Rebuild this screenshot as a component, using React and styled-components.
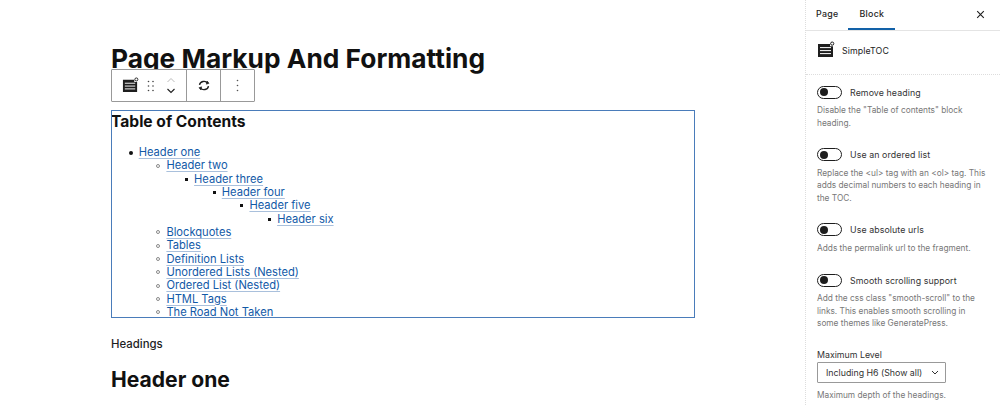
import styled, { createGlobalStyle } from "styled-components";

const Global = createGlobalStyle`
    html, body {
        margin: 0;
        height: 100%;
        overflow: hidden;
        background: #ffffff;
        font-family: Inter, "Liberation Sans", sans-serif;
    }
`

function TocIcon({size}) {
    return (
        <svg width={size} height={size} viewBox="0 0 18 18" fill="none">
            <path d="M1 3h12v2.2h3V16H1z" fill="#1e1e1e" />
            <path d="M3 6.6h11M3 9.6h11M3 12.6h11" stroke="#ffffff" strokeWidth="1" />
            <circle cx="15.2" cy="2.6" r="1.6" fill="#ffffff" stroke="#1e1e1e" strokeWidth="1" />
        </svg>
    )
}

function Toggle() {
    return <ToggleTrack><ToggleKnob /></ToggleTrack>
}

const settings = [
    {label: 'Remove heading', help: 'Disable the "Table of contents" block heading.'},
    {label: 'Use an ordered list', help: 'Replace the <ul> tag with an <ol> tag. This adds decimal numbers to each heading in the TOC.'},
    {label: 'Use absolute urls', help: 'Adds the permalink url to the fragment.'},
    {label: 'Smooth scrolling support', help: 'Add the css class "smooth-scroll" to the links. This enables smooth scrolling in some themes like GeneratePress.'},
]

const subHeadings = ['Blockquotes', 'Tables', 'Definition Lists', 'Unordered Lists (Nested)', 'Ordered List (Nested)', 'HTML Tags', 'The Road Not Taken']

export default function App() {
    return (
        <Page>
            <Global />
            <Editor>
                <Column>
                    <Title>Page Markup And Formatting</Title>
                    <Toolbar>
                        <ToolGroup $width={75}>
                            <TocIcon size={17} />
                            <svg width="8" height="12" viewBox="0 0 8 12" fill="#444">
                                <circle cx="1.5" cy="1.5" r="0.8" /><circle cx="6" cy="1.5" r="0.8" />
                                <circle cx="1.5" cy="6" r="0.8" /><circle cx="6" cy="6" r="0.8" />
                                <circle cx="1.5" cy="10.5" r="0.8" /><circle cx="6" cy="10.5" r="0.8" />
                            </svg>
                            <Mover>
                                <svg width="10" height="6" viewBox="0 0 10 6" fill="none"><path d="M1.5 5 5 1.5 8.5 5" stroke="#bbb" strokeWidth="1" /></svg>
                                <svg width="10" height="6" viewBox="0 0 10 6" fill="none"><path d="M1.5 1 5 4.5 8.5 1" stroke="#1e1e1e" strokeWidth="1.1" /></svg>
                            </Mover>
                        </ToolGroup>
                        <ToolGroup $width={34}>
                            <svg width="12" height="11" viewBox="0 0 13 12" fill="none" stroke="#1e1e1e" strokeWidth="1.5">
                                <path d="M1.6 5.4A5 4.6 0 0 1 10.6 3.4" />
                                <path d="M11.4 6.6A5 4.6 0 0 1 2.4 8.6" />
                                <path d="M12 3.6 9 4.6 10 1.2z" fill="#1e1e1e" strokeWidth="0.6" />
                                <path d="M1 8.4 4 7.4 3 10.8z" fill="#1e1e1e" strokeWidth="0.6" />
                            </svg>
                        </ToolGroup>
                        <ToolGroup $width={33}>
                            <svg width="3" height="13" viewBox="0 0 3 13" fill="#555">
                                <circle cx="1.5" cy="1.5" r="0.8" /><circle cx="1.5" cy="6.5" r="0.8" /><circle cx="1.5" cy="11.5" r="0.8" />
                            </svg>
                        </ToolGroup>
                    </Toolbar>
                    <TocBlock>
                        <TocTitle>Table of Contents</TocTitle>
                        <TocList $kind="disc">
                            <li>
                                <TocLink>Header one</TocLink>
                                <TocList $kind="circle">
                                    <li>
                                        <TocLink>Header two</TocLink>
                                        <TocList $kind="square">
                                            <li>
                                                <TocLink>Header three</TocLink>
                                                <TocList $kind="square">
                                                    <li>
                                                        <TocLink>Header four</TocLink>
                                                        <TocList $kind="square">
                                                            <li>
                                                                <TocLink>Header five</TocLink>
                                                                <TocList $kind="square">
                                                                    <li><TocLink>Header six</TocLink></li>
                                                                </TocList>
                                                            </li>
                                                        </TocList>
                                                    </li>
                                                </TocList>
                                            </li>
                                        </TocList>
                                    </li>
                                    {subHeadings.map((h) => <li key={h}><TocLink>{h}</TocLink></li>)}
                                </TocList>
                            </li>
                        </TocList>
                    </TocBlock>
                    <Paragraph>Headings</Paragraph>
                    <HeaderOne>Header one</HeaderOne>
                </Column>
            </Editor>
            <Sidebar>
                <Tabs>
                    <Tab $pad={10}>Page</Tab>
                    <Tab $pad={11} $active>Block</Tab>
                    <Close>
                        <svg width="9" height="9" viewBox="0 0 9 9" fill="none"><path d="M1.2 1.2l6.6 6.6M7.8 1.2 1.2 7.8" stroke="#1e1e1e" strokeWidth="1.1" /></svg>
                    </Close>
                </Tabs>
                <BlockCard>
                    <TocIcon size={18} />
                    <BlockName>SimpleTOC</BlockName>
                </BlockCard>
                <Panel>
                    {settings.map((s) => (
                        <Setting key={s.label}>
                            <ToggleRow>
                                <Toggle />
                                <ToggleLabel>{s.label}</ToggleLabel>
                            </ToggleRow>
                            <Help>{s.help}</Help>
                        </Setting>
                    ))}
                    <FieldLabel>Maximum Level</FieldLabel>
                    <SelectBox>
                        <span>Including H6 (Show all)</span>
                        <svg width="8" height="5" viewBox="0 0 8 5" fill="none"><path d="M1 1l3 3 3-3" stroke="#333" strokeWidth="1" /></svg>
                    </SelectBox>
                    <Help>Maximum depth of the headings.</Help>
                </Panel>
            </Sidebar>
        </Page>
    )
}

const Page = styled.div`
    display: flex;
    width: 1000px;
    height: 405px;
    overflow: hidden;
`

const Editor = styled.div`
    width: 805px;
    flex-shrink: 0;
    padding-left: 111px;
    box-sizing: border-box;
`

const Column = styled.div`
    position: relative;
    width: 584px;
    padding-top: 43px;
`

const Title = styled.h1`
    margin: 0 0 36px;
    font-size: 26.3px;
    line-height: 31px;
    font-weight: 700;
    color: #111111;
    white-space: nowrap;
`

const Toolbar = styled.div`
    position: absolute;
    left: 0;
    top: 69px;
    height: 33px;
    display: flex;
    background: #ffffff;
    border: 1px solid #999999;
    box-sizing: border-box;
    border-radius: 1px;
`

const ToolGroup = styled.div`
    width: ${(props) => props.$width}px;
    box-sizing: border-box;
    display: flex;
    align-items: center;
    justify-content: center;
    gap: 8px;
    border-right: 1px solid #999999;
    &:last-child {
        border-right: none;
    }
`

const Mover = styled.div`
    display: flex;
    flex-direction: column;
    gap: 5px;
    margin-left: 3px;
`

const TocBlock = styled.div`
    height: 208px;
    box-sizing: border-box;
    padding-top: 2px;
    outline: 1px solid #4a7cba;
    outline-offset: -1px;
    overflow: hidden;
`

const TocTitle = styled.h2`
    margin: 0 0 14px;
    font-size: 15.6px;
    line-height: 20px;
    font-weight: 700;
    color: #111111;
`

const TocList = styled.ul`
    margin: 0;
    padding-left: 27.7px;
    list-style: none;
    font-size: 11.15px;
    line-height: 13.33px;
    color: #1e1e1e;

    > li {
        position: relative;
    }

    > li::before {
        content: "";
        position: absolute;
        box-sizing: border-box;
        top: ${(props) => props.$kind === 'square' ? '5px' : '4.5px'};
        left: ${(props) => props.$kind === 'square' ? '-9px' : '-10px'};
        width: ${(props) => props.$kind === 'square' ? '3px' : '4px'};
        height: ${(props) => props.$kind === 'square' ? '3px' : '4px'};
        border-radius: ${(props) => props.$kind === 'square' ? '0' : '50%'};
        background: ${(props) => props.$kind === 'circle' ? 'transparent' : '#111111'};
        border: ${(props) => props.$kind === 'circle' ? '1px solid #8a8a8a' : 'none'};
    }
`

const TocLink = styled.a`
    color: #1259a7;
    text-decoration: underline;
    text-decoration-color: #a9c0dc;
    text-underline-offset: 2px;
`

const Paragraph = styled.p`
    margin: 18px 0 0;
    font-size: 11.4px;
    line-height: 16px;
    font-weight: 500;
    color: #1e1e1e;
`

const HeaderOne = styled.h2`
    margin: 15px 0 0;
    font-size: 21.1px;
    line-height: 26px;
    font-weight: 700;
    color: #111111;
`

const Sidebar = styled.aside`
    width: 195px;
    flex-shrink: 0;
    box-sizing: border-box;
    border-left: 1px dotted #dddddd;
    color: #1e1e1e;
`

const Tabs = styled.div`
    display: flex;
    height: 31px;
    box-sizing: border-box;
    border-bottom: 1px solid #e4e4e4;
`

const Tab = styled.div`
    padding: 0 ${(props) => props.$pad}px;
    line-height: 28px;
    font-size: 8.8px;
    font-weight: 500;
    letter-spacing: 0.3px;
    height: 30px;
    box-sizing: border-box;
    border-bottom: 2px solid ${(props) => props.$active ? '#1261a8' : 'transparent'};
`

const Close = styled.div`
    margin-left: auto;
    margin-right: 15px;
    height: 28px;
    display: flex;
    align-items: center;
`

const BlockCard = styled.div`
    display: flex;
    align-items: center;
    gap: 7px;
    height: 38px;
    padding: 0 11px 5px;
    border-bottom: 1px dotted #dddddd;
`

const BlockName = styled.span`
    font-size: 8.8px;
    letter-spacing: 0.1px;
    color: #222222;
`

const Panel = styled.div`
    padding: 10px 11px 0;
`

const Setting = styled.div`
    margin-bottom: 18.7px;
`

const ToggleRow = styled.div`
    display: flex;
    align-items: center;
    height: 14px;
    margin-bottom: 5px;
`

const ToggleTrack = styled.div`
    width: 25px;
    height: 13px;
    box-sizing: border-box;
    border: 1px solid #1e1e1e;
    border-radius: 7px;
    display: flex;
    align-items: center;
    padding-left: 2px;
`

const ToggleKnob = styled.div`
    width: 8px;
    height: 8px;
    border-radius: 50%;
    background: #1e1e1e;
`

const ToggleLabel = styled.span`
    margin-left: 8px;
    font-size: 8.8px;
    letter-spacing: 0.1px;
    color: #333333;
`

const Help = styled.p`
    margin: 0;
    font-size: 8.3px;
    line-height: 12.5px;
    color: #777777;
`

const FieldLabel = styled.div`
    font-size: 8.8px;
    line-height: 13px;
    color: #333333;
`

const SelectBox = styled.div`
    width: 129px;
    height: 21px;
    margin: 1px 0 6px;
    padding: 0 6px 0 8px;
    box-sizing: border-box;
    border: 1px solid #999999;
    border-radius: 1px;
    display: flex;
    align-items: center;
    justify-content: space-between;
    font-size: 8.8px;
    white-space: nowrap;
    color: #333333;
`
